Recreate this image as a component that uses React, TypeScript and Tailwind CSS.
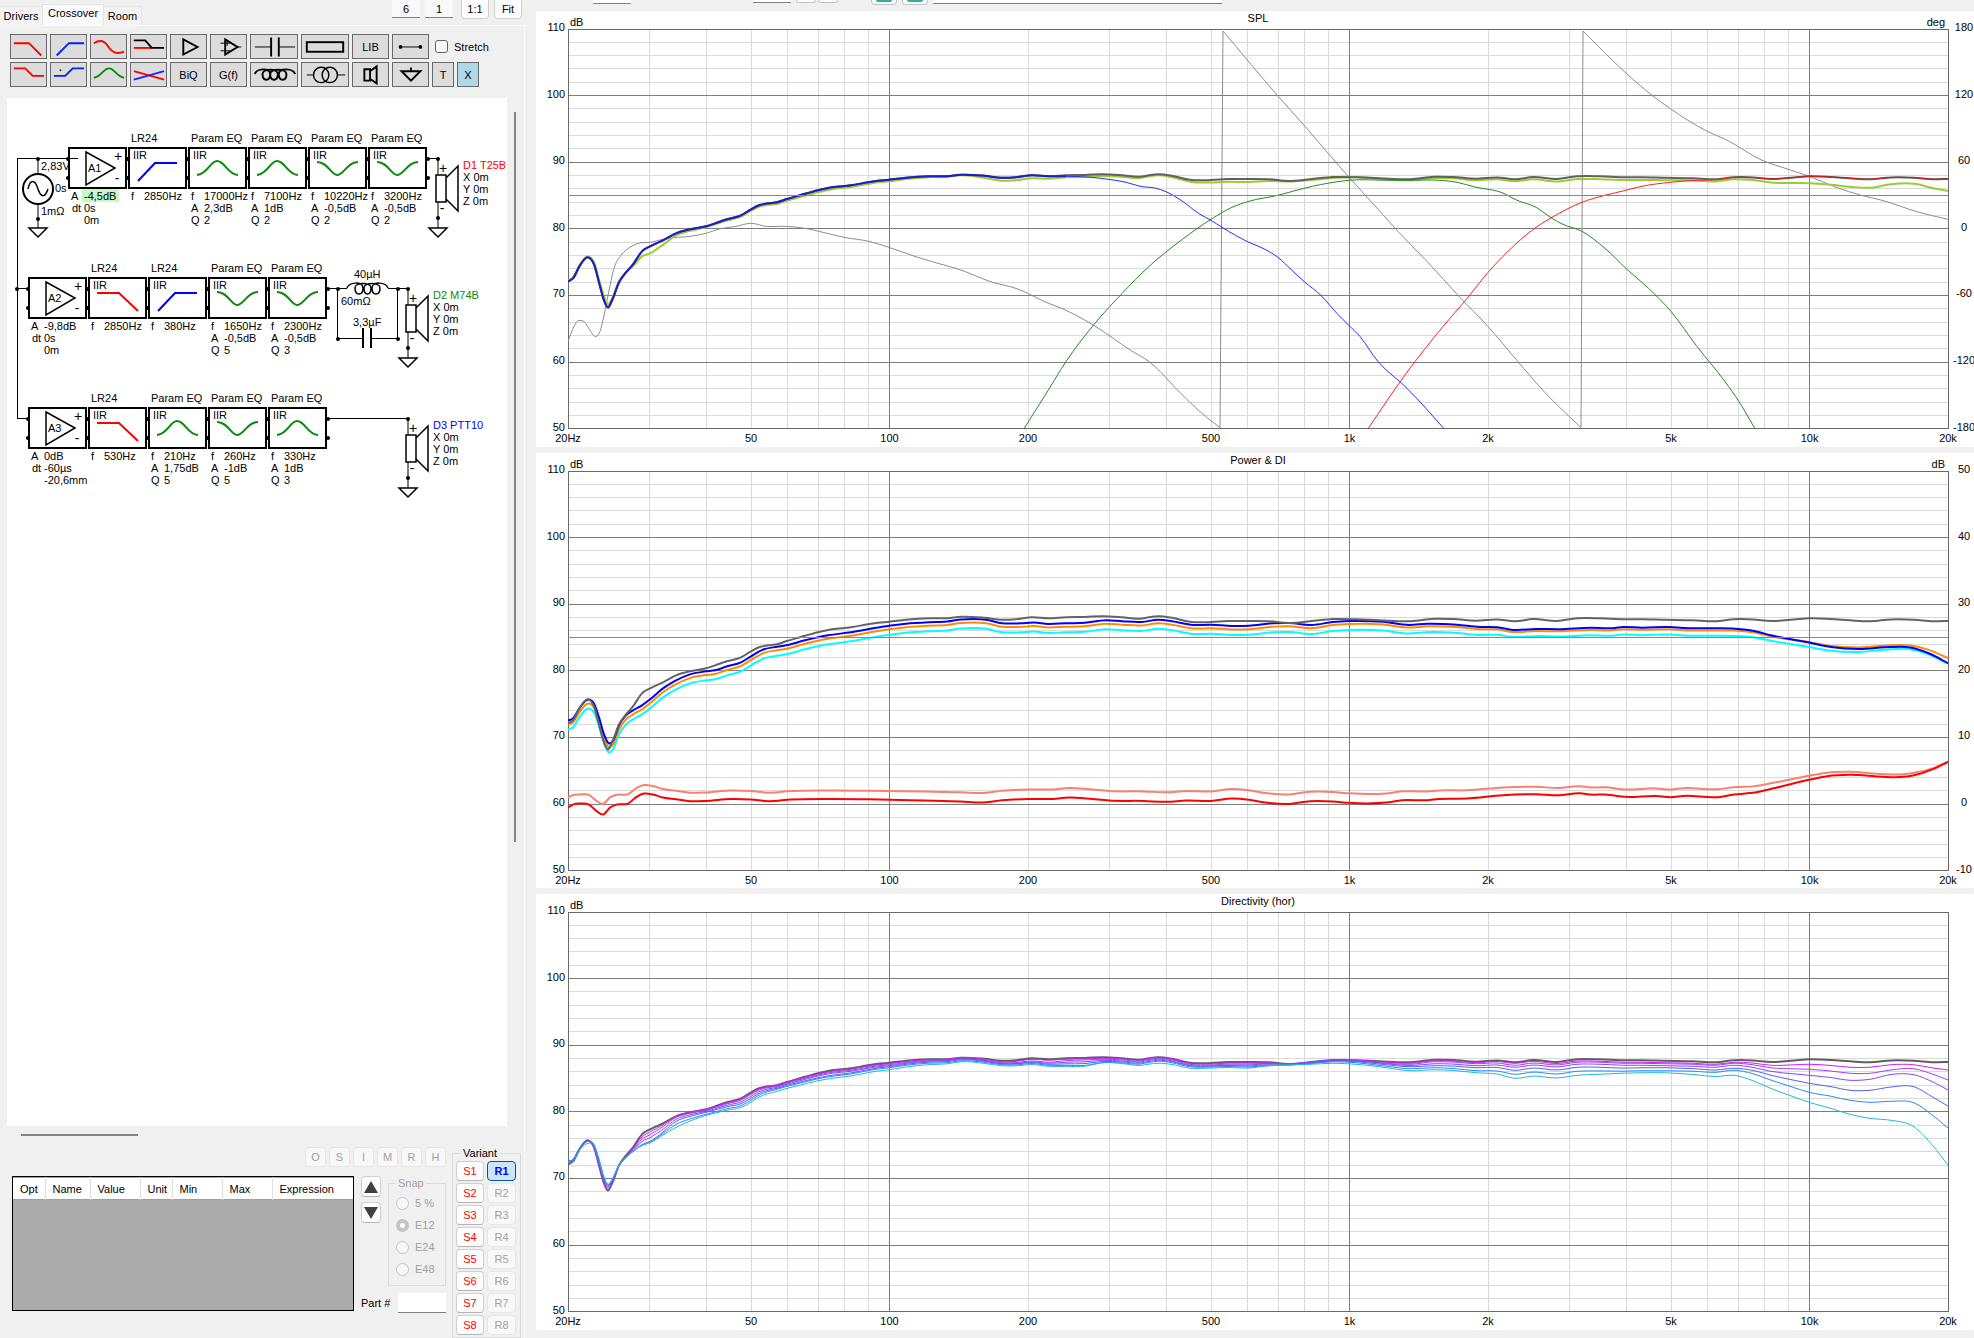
import { useState, type ReactNode } from "react";
import clsx from "clsx";

type Point = [number, number];

/* ---------- curve data, in plot units (1380 x 399) ---------- */

const PLOT_W = 1380;
const PLOT_H = 399;

const onAxis: Point[] = [
  [0, 252], [5, 249], [12, 236], [20, 228], [26, 235], [31, 253], [36, 271], [40, 278], [44, 271], [51, 253],
  [58, 243], [65, 235], [74, 222], [82, 217], [95, 211], [108, 204], [122, 200], [138, 197], [147, 194],
  [159, 190], [173, 186], [183, 180], [191, 176], [200, 174], [209, 173], [218, 170], [232, 166], [250, 161],
  [264, 158], [283, 156], [300, 153], [310, 151.5], [321, 150.5], [338, 148.5], [361, 147], [379, 147],
  [393, 145.5], [416, 146.5], [434, 148.5], [448, 148], [464, 146], [480, 147], [498, 146], [517, 145.7],
  [535, 145], [554, 146], [572, 147.5], [581, 146], [590, 145], [604, 146.5], [622, 150.5], [643, 150.8],
  [659, 149.8], [681, 149.8], [700, 150], [721, 151.7], [742, 150], [765, 147.8], [788, 148], [811, 149],
  [843, 150], [866, 147.5], [885, 147.8], [908, 149.5], [929, 148.2], [947, 150], [965, 147.8], [989, 149.7],
  [1009, 147], [1032, 147], [1055, 148], [1074, 148], [1097, 148.5], [1125, 149], [1148, 150], [1166, 148],
  [1185, 148.2], [1203, 149.7], [1226, 148.2], [1241, 147], [1263, 147.7], [1282, 149], [1302, 150],
  [1323, 148.2], [1346, 148.5], [1365, 150], [1380, 149.7],
];

const woofer: Point[] = [
  ...onAxis.filter(([x]) => x <= 480),
  [498, 147], [522, 148], [540, 150], [558, 153], [572, 157], [588, 159], [597, 162], [613, 171], [632, 185],
  [643, 191], [654, 198], [681, 213], [695, 219], [710, 228], [723, 240], [736, 252], [753, 266], [769, 284],
  [781, 296], [792, 307], [810, 332], [820, 342], [833, 353], [848, 368], [876, 399],
];

const midrange: Point[] = [
  [456, 399], [480, 361], [498, 332], [526, 295], [554, 264], [581, 237], [613, 211], [643, 190], [664, 178],
  [681, 172], [710, 166], [736, 159], [769, 152.5], [781, 151], [820, 151], [843, 151], [871, 151], [889, 153],
  [908, 158], [920, 160], [933, 163], [949, 171], [968, 178], [984, 189], [995, 195], [1014, 202], [1037, 219],
  [1058, 239], [1088, 266], [1103, 282], [1129, 317], [1157, 352], [1171, 372], [1187, 399],
];

const tweeter: Point[] = [
  [800, 399], [838, 344], [875, 297], [899, 269], [920, 243], [940, 222], [968, 198], [984, 188], [1014, 173],
  [1037, 166], [1058, 161], [1074, 157], [1103, 153], [1129, 151], [1148, 150.5],
  ...onAxis.filter(([x]) => x > 1150),
];

// one array per wrap of the phase
const phase: Point[][] = [
  [
    [0, 312], [5, 299], [9, 292], [13, 291], [17, 293], [22, 301], [28, 307], [32, 302], [36, 286], [40, 266],
    [46, 239], [53, 226], [62, 218], [70, 214], [82, 213], [99, 209], [122, 207], [138, 204], [150, 200],
    [168, 197], [183, 194], [198, 197], [218, 197], [237, 199], [255, 203], [276, 208], [301, 212], [321, 218],
    [347, 227], [370, 234], [388, 239], [425, 253], [448, 259], [460, 264], [476, 272], [494, 279], [526, 296],
    [563, 321], [581, 332], [613, 364], [632, 382], [643, 391], [652, 398],
  ],
  [
    [655, 2], [681, 33], [710, 67], [736, 96], [760, 124], [781, 148], [811, 181], [829, 201], [859, 232],
    [892, 268], [920, 297], [949, 331], [977, 363], [1013, 398],
  ],
  [
    [1015, 2], [1058, 44], [1085, 67], [1103, 80], [1139, 102], [1157, 110], [1194, 131], [1220, 140],
    [1241, 147], [1268, 158], [1293, 166], [1314, 171], [1351, 183], [1380, 190],
  ],
];

const power: Point[] = [
  [0, 249], [5, 247], [12, 236], [20, 228], [26, 232], [31, 246], [36, 263], [41, 272], [45, 269], [51, 254],
  [58, 244], [65, 239], [74, 234], [82, 228], [95, 217], [108, 209], [122, 203], [138, 200], [147, 199],
  [159, 195], [173, 191], [183, 185], [196, 178], [209, 175.5], [218, 174], [237, 169], [260, 164], [283, 161],
  [300, 158], [321, 154.5], [338, 152.5], [361, 151], [379, 150.3], [393, 148.3], [418, 148.5], [434, 152],
  [453, 152], [466, 151.3], [480, 152.7], [498, 152], [517, 151.6], [538, 149], [554, 150], [574, 150.7],
  [590, 148.5], [604, 150], [625, 153.7], [643, 153.5], [664, 154.7], [681, 154.4], [705, 152], [721, 151.7],
  [744, 153.7], [765, 150.7], [781, 149.8], [815, 150.5], [841, 153.7], [859, 152.5], [889, 153.5], [912, 155.7],
  [929, 156], [945, 158.7], [968, 157.7], [991, 158], [1023, 156.5], [1042, 157], [1055, 155.8], [1074, 156.4],
  [1102, 155.8], [1115, 156.7], [1143, 157], [1164, 157.2], [1185, 159.5], [1203, 164], [1241, 171.3],
  [1263, 175.7], [1291, 177.7], [1323, 175.7], [1342, 176.2], [1360, 181.7], [1380, 191.7],
];

const directivityIndex: Point[] = [
  [0, 336], [5, 333], [12, 332], [21, 333], [28, 339], [35, 343], [42, 336], [49, 333], [60, 332], [69, 325],
  [76, 322], [85, 323], [95, 326], [108, 327.7], [122, 329.7], [138, 329.4], [163, 327.4], [183, 328],
  [200, 329.7], [223, 328], [260, 327.4], [301, 327.7], [356, 329], [393, 330], [416, 331], [434, 328.8],
  [460, 327.4], [485, 327.4], [501, 326], [521, 327.2], [541, 329], [576, 329.4], [599, 330.3], [618, 329],
  [643, 329.4], [664, 327], [681, 328.3], [695, 330.7], [721, 332.4], [742, 329.7], [765, 330], [781, 331.3],
  [818, 331], [834, 328.7], [859, 328.6], [871, 327.4], [899, 327], [935, 323.7], [968, 322.7], [991, 323.7],
  [1012, 321.7], [1023, 323], [1037, 323], [1058, 325.3], [1088, 324.4], [1103, 325.6], [1115, 324.4],
  [1150, 325.6], [1166, 323], [1187, 321], [1208, 316.3], [1241, 308.3], [1259, 304.7], [1282, 303.3],
  [1314, 305.3], [1332, 305.6], [1346, 303.7], [1365, 297.7], [1380, 290.3],
];

const listeningOffsets: Point[] = [
  [0, -1], [20, -1], [36, -4], [44, -2], [60, 0], [70, 4], [82, 7], [108, 2], [138, 1], [250, 2], [321, 1.5],
  [393, 0.5], [434, 3], [464, 3], [498, 2], [554, 1.5], [590, 1], [643, 2.5], [681, 3], [721, 0.5], [765, 1],
  [781, -0.5], [811, 0.5], [843, 1], [908, 1.5], [945, 2], [1023, 3], [1097, 2.5], [1166, 2], [1195, 3],
  [1220, 5], [1241, 7], [1296, 9], [1332, 6], [1351, 6], [1380, 12],
];
const earlyOffsets: Point[] = [
  [0, 4], [41, 4], [65, 4], [200, 3.5], [681, 3.5], [945, 2], [1150, 2.3], [1200, 1.3], [1241, -0.5],
  [1291, -1.5], [1342, -2], [1380, -5],
];
const soundPowerOffsets: Point[] = [
  [0, 9], [681, 9], [781, 9], [912, 8], [945, 7], [1023, 7.5], [1164, 7.5], [1203, 5.5], [1241, 4.5],
  [1291, 3], [1323, 2.3], [1380, 0.5],
];
const earlyDiOffsets: Point[] = [
  [0, -10], [12, -9], [35, -10.5], [76, -8.5], [300, -8.5], [416, -9.5], [781, -9.5], [1012, -7], [1150, -8],
  [1208, -5.5], [1241, -4], [1282, -3], [1346, -2.5], [1380, 0],
];

// [x, offset of each off-axis angle below the on-axis curve]
const angleOffsets: number[][] = [
  [0, -1, -2, -3, -3, -3, -2], [20, 0, 0, 1, 1, 1, 3], [31, -1, -2, -3, -5, -6, -6], [40, -1, -3, -4, -5, -6, -6],
  [51, 0, 0, 0, 0, 0, 0], [65, 1, 2, 3, 4, 4, 4], [78, 3, 6, 9, 13, 14, 14], [90, 2, 4, 7, 10, 11, 12],
  [108, 0, 1, 3, 5, 8, 11], [138, 0, 1, 2, 3, 5, 6], [183, 1, 2, 4, 6, 8, 10], [209, 0, 1, 2, 3, 4, 6],
  [264, 1, 2, 3, 5, 6, 8], [321, 1, 2, 3, 4, 5, 7], [393, 0, 1, 1, 2, 3, 4], [434, 1, 2, 3, 3, 4, 5],
  [480, 1, 3, 4, 5, 6, 7], [512, 1, 2, 4, 6, 8, 9], [538, 1, 2, 3, 4, 5, 5], [590, 0, 1, 2, 3, 4, 6],
  [643, 1, 2, 3, 3, 4, 5], [681, 1, 2, 3, 4, 5, 6], [721, 0, 0, 0, 1, 1, 1], [781, 0, 0, 0, 1, 2, 4],
  [797, 0, 1, 1, 2, 3, 4], [836, 1, 2, 3, 4, 6, 8], [866, 1, 2, 4, 6, 8, 10], [912, 1, 2, 4, 6, 9, 11],
  [945, 1, 3, 5, 8, 12, 16], [1023, 2, 3, 5, 8, 12, 16], [1050, 2, 3, 5, 8, 11, 13], [1097, 2, 3, 5, 7, 10, 12],
  [1166, 2, 3, 5, 8, 10, 15], [1195, 3, 5, 8, 11, 15, 23], [1241, 5, 10, 16, 24, 33, 43],
  [1282, 6, 12, 19, 29, 39, 53], [1302, 5, 11, 17, 28, 40, 56], [1330, 4, 9, 13, 26, 41, 61],
  [1346, 4, 8, 14, 26, 42, 66], [1360, 5, 10, 17, 32, 49, 77], [1380, 8, 18, 28, 44, 66, 103],
];
const angleColors = ["#d61aff", "#ac38ff", "#8148ff", "#4f62f5", "#2d8ae6", "#22b8dc"];

function valueAt(table: Point[], x: number) {
  const i = table.findIndex(([tx]) => tx >= x);
  if (i <= 0) return i === 0 ? table[0][1] : table[table.length - 1][1];
  const [x0, y0] = table[i - 1];
  const [x1, y1] = table[i];
  return y0 + ((y1 - y0) * (x - x0)) / (x1 - x0);
}

const shifted = (curve: Point[], offsets: Point[]): Point[] => curve.map(([x, y]) => [x, y + valueAt(offsets, x)]);

// cubic Hermite through the points, slopes weighted by the distance to each neighbour
function smooth(points: Point[], start = "M") {
  const rise = (i: number) => (points[i + 1][1] - points[i][1]) / (points[i + 1][0] - points[i][0]);
  const last = points.length - 1;
  const slopes = points.map(([x], i) => {
    if (i === 0) return rise(0);
    if (i === last) return rise(last - 1);
    const before = x - points[i - 1][0];
    const after = points[i + 1][0] - x;
    return (rise(i - 1) * after + rise(i) * before) / (before + after);
  });
  let d = `${start}${points[0][0]} ${points[0][1]}`;
  for (let i = 0; i < last; i++) {
    const [x0, y0] = points[i];
    const [x1, y1] = points[i + 1];
    const h = (x1 - x0) / 3;
    d += `C${x0 + h} ${y0 + slopes[i] * h} ${x1 - h} ${y1 - slopes[i + 1] * h} ${x1} ${y1}`;
  }
  return d;
}

interface Curve {
  d: string;
  color: string;
  width: number;
}

const phaseCurve: Curve = {
  d: phase.map((part, i) => smooth(part, i ? "L" : "M")).join(""),
  color: "#8c8c8c",
  width: 1,
};

const splCurves: Curve[] = [
  phaseCurve,
  { d: smooth(shifted(onAxis, listeningOffsets)), color: "#9acd32", width: 2 },
  { d: smooth(onAxis), color: "#606060", width: 2 },
  { d: smooth(midrange), color: "#228b22", width: 1 },
  { d: smooth(woofer.filter(([x]) => x <= 500)), color: "#1c1cc8", width: 2 },
  { d: smooth(woofer.filter(([x]) => x >= 498)), color: "#2a2aff", width: 1 },
  { d: smooth(tweeter.filter(([x]) => x <= 1170)), color: "#ff2020", width: 1 },
  { d: smooth(tweeter.filter(([x]) => x >= 1166)), color: "#d01c1c", width: 1 },
];

const powerCurves: Curve[] = [
  { d: smooth(shifted(power, soundPowerOffsets)), color: "#00ffff", width: 2 },
  { d: smooth(shifted(power, earlyOffsets)), color: "#ff8c00", width: 2 },
  { d: smooth(power), color: "#0000ff", width: 2 },
  { d: smooth(onAxis), color: "#646464", width: 2 },
  { d: smooth(shifted(directivityIndex, earlyDiOffsets)), color: "#fa8072", width: 2 },
  { d: smooth(directivityIndex), color: "#ff0000", width: 2 },
];

const directivityCurves: Curve[] = [
  { d: smooth(onAxis), color: "#606060", width: 2 },
  ...angleColors.map((color, i) => ({
    d: smooth(shifted(onAxis, angleOffsets.map((row): Point => [row[0], row[i + 1]]))),
    color,
    width: 1,
  })),
];

/* ---------- charts ---------- */

const frequencies = [
  30, 40, 50, 60, 70, 80, 90, 200, 300, 400, 500, 600, 700, 800, 900, 2000, 3000, 4000, 5000, 6000, 7000, 8000, 9000,
];
const decades = [100, 1000, 10000];
const frequencyLabels: [number, string][] = [
  [20, "20Hz"], [50, "50"], [100, "100"], [200, "200"], [500, "500"], [1000, "1k"], [2000, "2k"], [5000, "5k"],
  [10000, "10k"], [20000, "20k"],
];
const levels = [110, 100, 90, 80, 70, 60, 50];

const fx = (f: number) => `${(Math.log10(f / 20) / 3) * 100}%`;
const ly = (db: number) => `${((110 - db) / 60) * 100}%`;

interface ChartProps {
  title: string;
  curves: Curve[];
  rightUnit?: string;
  rightLabels?: string[];
  target?: boolean;
}

function Chart({ title, curves, rightUnit, rightLabels, target }: ChartProps) {
  const minor = Array.from({ length: 29 }, (_, i) => 52 + i * 2).filter((db) => db % 10 !== 0);
  return (
    <section className="flex min-h-0 flex-1 bg-white py-[18px] pr-[26px] pl-8 last:basis-[2px]">
      <svg className="h-full w-full overflow-visible text-[11px]" role="img" aria-label={title}>
        <g shapeRendering="crispEdges" strokeWidth="1">
          {minor.map((db) => (
            <line key={db} x1="0" x2="100%" y1={ly(db)} y2={ly(db)} stroke="#dadada" />
          ))}
          {frequencies.map((f) => (
            <line key={f} x1={fx(f)} x2={fx(f)} y1="0" y2="100%" stroke="#dadada" />
          ))}
          {levels.map((db) => (
            <line key={db} x1="0" x2="100%" y1={ly(db)} y2={ly(db)} stroke="#7d7d7d" />
          ))}
          {decades.map((f) => (
            <line key={f} x1={fx(f)} x2={fx(f)} y1="0" y2="100%" stroke="#7d7d7d" />
          ))}
          <rect width="100%" height="100%" fill="none" stroke="#696969" />
        </g>
        <svg width="100%" height="100%" viewBox={`0 0 ${PLOT_W} ${PLOT_H}`} preserveAspectRatio="none">
          {curves.map((curve, i) => (
            <path
              key={i}
              d={curve.d}
              fill="none"
              stroke={curve.color}
              strokeWidth={curve.width}
              strokeLinejoin="round"
              vectorEffect="non-scaling-stroke"
            />
          ))}
        </svg>
        {target && <line x1="0" x2="100%" y1={ly(85)} y2={ly(85)} stroke="#ff33ff" shapeRendering="crispEdges" />}
        <text x="50%" y="-7" textAnchor="middle">{title}</text>
        <text x="2" y="-3">dB</text>
        <text x="100%" y="-3" dx="-3" textAnchor="end">{rightUnit}</text>
        {levels.map((db, i) => (
          <g key={db}>
            <text x="-3" y={ly(db)} dy="2" textAnchor="end">{db}</text>
            <text x="100%" y={ly(db)} dx="16" dy="2" textAnchor="middle">{rightLabels?.[i]}</text>
          </g>
        ))}
        {frequencyLabels.map(([f, label]) => (
          <text key={f} x={fx(f)} y="100%" dy="13" textAnchor="middle">{label}</text>
        ))}
      </svg>
    </section>
  );
}

/* ---------- toolbar ---------- */

interface Tool {
  name: string;
  wide?: boolean;
  label?: string;
  icon?: ReactNode;
}

const toolRows: Tool[][] = [
  [
    { name: "Low pass", icon: <path d="M3 9H19L32 22" stroke="#f00" strokeWidth="2" /> },
    { name: "High pass", icon: <path d="M6 22L19 9H35" stroke="#02f" strokeWidth="2" /> },
    { name: "All pass", icon: <path d="M3 9C8 6 13 5 17 11C22 19 27 21 35 18" stroke="#f00" strokeWidth="2" /> },
    {
      name: "Shelf pass",
      icon: (
        <>
          <path d="M3 14H22" stroke="#f00" strokeWidth="2" />
          <path d="M3 6H15L22 14H35" strokeWidth="2" />
        </>
      ),
    },
    { name: "Buffer", icon: <path d="M13 5L28 13L13 21Z" strokeWidth="2" /> },
    {
      name: "Op amp",
      icon: (
        <>
          <path d="M15 5L28 13L15 21Z" strokeWidth="2" />
          <path d="M10 9H20M10 17H20M17 6V12M28 13H32" />
        </>
      ),
    },
    {
      name: "Capacitor",
      wide: true,
      icon: (
        <>
          <path d="M4 13H21M29 13H46" />
          <path d="M21 3V23M29 3V23" strokeWidth="2" />
        </>
      ),
    },
    { name: "Resistor", wide: true, icon: <rect x="5" y="8" width="38" height="10" strokeWidth="2" /> },
    { name: "Library", label: "LIB" },
    {
      name: "Wire",
      icon: (
        <>
          <path d="M7 13H30" />
          <circle cx="8" cy="13" r="2" fill="#000" stroke="none" />
          <circle cx="29" cy="13" r="2" fill="#000" stroke="none" />
        </>
      ),
    },
  ],
  [
    { name: "High shelf", icon: <path d="M3 6H15L23 14H35" stroke="#f00" strokeWidth="2" /> },
    {
      name: "Low shelf",
      icon: (
        <>
          <path d="M3 14H15L23 6H35" stroke="#02f" strokeWidth="2" />
          <circle cx="10" cy="8" r="1" fill="#333" stroke="none" />
        </>
      ),
    },
    {
      name: "Parametric EQ",
      icon: <path d="M3 16C11 15 13 6 19 6C25 6 27 15 35 16" stroke="#0a8a0a" strokeWidth="2" />,
    },
    {
      name: "Crossover pair",
      icon: (
        <>
          <path d="M3 9L35 18" stroke="#f00" strokeWidth="2" />
          <path d="M3 18L35 9" stroke="#22f" strokeWidth="2" />
        </>
      ),
    },
    { name: "Biquad", label: "BiQ" },
    { name: "Transfer function", label: "G(f)" },
    {
      name: "Inductor",
      wide: true,
      icon: (
        <path
          d="M4 12C6 6 20 5 20 12C20 20 12 20 12 12C12 6 28 6 28 12C28 20 20 20 20 12C20 6 37 6 37 12C37 20 29 20 29 12C29 5 44 6 46 12"
          strokeWidth="2"
        />
      ),
    },
    {
      name: "Transformer",
      wide: true,
      icon: (
        <>
          <circle cx="20" cy="13" r="8" strokeWidth="1.5" />
          <circle cx="29" cy="13" r="8" strokeWidth="1.5" />
          <path d="M5 13H12M37 13H45" />
        </>
      ),
    },
    {
      name: "Driver",
      icon: <path d="M12 7H18V19H12ZM18 9L25 4V22L18 17" strokeWidth="2" />,
    },
    { name: "Ground", icon: <path d="M19 5V9M9 9H29L19 19Z" strokeWidth="2" /> },
  ],
];

function ToolButton({ tool }: { tool: Tool }) {
  return (
    <button
      aria-label={tool.name}
      className={clsx(
        "flex h-[25px] items-center justify-center border border-[#696969] bg-[#dcdcdc]",
        tool.wide ? "w-12" : "w-[37px]",
      )}
    >
      {tool.label ?? (
        <svg
          className="-m-px h-[25px] w-full shrink-0"
          viewBox={tool.wide ? "0 0 48 25" : "0 0 37 25"}
          fill="none"
          stroke="#000"
        >
          {tool.icon}
        </svg>
      )}
    </button>
  );
}

/* ---------- schematic ---------- */

const blockIcons = {
  lowpass: <path d="M9 16H31L50 34" stroke="#f00" />,
  highpass: <path d="M10 34L27 16H49" stroke="#00f" />,
  peak: <path d="M9 28C20 27 22 14 29 14C37 14 39 27 50 28" stroke="#0a8a0a" />,
  dip: <path d="M9 15C20 15 23 28 29 28C36 28 39 15 50 15" stroke="#0a8a0a" />,
};

interface Block {
  icon: keyof typeof blockIcons;
  f: string;
  A?: string;
  Q?: string;
}

interface Channel {
  x: number;
  y: number;
  amp: string;
  gain: string;
  delay: string;
  distance: string;
  selected?: boolean;
  blocks: Block[];
  driverX: number;
  driver: string;
  color: string;
}

const channels: Channel[] = [
  {
    x: 68,
    y: 147,
    amp: "A1",
    gain: "-4,5dB",
    delay: "0s",
    distance: "0m",
    selected: true,
    blocks: [
      { icon: "highpass", f: "2850Hz" },
      { icon: "peak", f: "17000Hz", A: "2,3dB", Q: "2" },
      { icon: "peak", f: "7100Hz", A: "1dB", Q: "2" },
      { icon: "dip", f: "10220Hz", A: "-0,5dB", Q: "2" },
      { icon: "dip", f: "3200Hz", A: "-0,5dB", Q: "2" },
    ],
    driverX: 438,
    driver: "D1 T25B",
    color: "#f00",
  },
  {
    x: 28,
    y: 277,
    amp: "A2",
    gain: "-9,8dB",
    delay: "0s",
    distance: "0m",
    blocks: [
      { icon: "lowpass", f: "2850Hz" },
      { icon: "highpass", f: "380Hz" },
      { icon: "dip", f: "1650Hz", A: "-0,5dB", Q: "5" },
      { icon: "dip", f: "2300Hz", A: "-0,5dB", Q: "3" },
    ],
    driverX: 408,
    driver: "D2 M74B",
    color: "#0a8a0a",
  },
  {
    x: 28,
    y: 407,
    amp: "A3",
    gain: "0dB",
    delay: "-60µs",
    distance: "-20,6mm",
    blocks: [
      { icon: "lowpass", f: "530Hz" },
      { icon: "peak", f: "210Hz", A: "1,75dB", Q: "5" },
      { icon: "dip", f: "260Hz", A: "-1dB", Q: "5" },
      { icon: "peak", f: "330Hz", A: "1dB", Q: "3" },
    ],
    driverX: 408,
    driver: "D3 PTT10",
    color: "#00f",
  },
];

const Label = ({ x, y, children, fill = "#000" }: { x: number; y: number; children: ReactNode; fill?: string }) => (
  <text x={x} y={y} fill={fill} stroke="none">{children}</text>
);

const Sign = ({ x, y, children }: { x: number; y: number; children: ReactNode }) => (
  <text x={x} y={y} textAnchor="middle" fill="#000" stroke="none" className="text-sm">{children}</text>
);

const Dot = ({ x, y }: { x: number; y: number }) => <circle cx={x} cy={y} r="2" fill="#000" stroke="none" />;

function Frame() {
  return (
    <>
      <rect x="1" y="1" width="57" height="40" fill="#fff" strokeWidth="2" />
      <Dot x={0} y={12} />
      <Dot x={0} y={31} />
      <Dot x={60} y={12} />
      <Dot x={60} y={31} />
    </>
  );
}

function ChannelRow({ channel }: { channel: Channel }) {
  const { x, y, blocks, driverX } = channel;
  return (
    <>
      <g transform={`translate(${x} ${y})`}>
        <Frame />
        <path d="M18 5L47 21L18 38Z" strokeWidth="1.5" />
        <Label x={20} y={25}>{channel.amp}</Label>
        <Sign x={50} y={14}>+</Sign>
        <Sign x={49} y={36}>-</Sign>
        {channel.selected && <rect x="14" y="42" width="37" height="13" fill="#c6f9c6" stroke="none" />}
        <Label x={3} y={53}>A</Label>
        <Label x={16} y={53}>{channel.gain}</Label>
        <Label x={4} y={65}>dt</Label>
        <Label x={16} y={65}>{channel.delay}</Label>
        <Label x={16} y={77}>{channel.distance}</Label>
      </g>
      {blocks.map((block, i) => (
        <g key={i} transform={`translate(${x + 60 * (i + 1)} ${y})`}>
          <Frame />
          <Label x={3} y={-5}>{block.A ? "Param EQ" : "LR24"}</Label>
          <Label x={5} y={12}>IIR</Label>
          <g strokeWidth="2">{blockIcons[block.icon]}</g>
          <Label x={3} y={53}>f</Label>
          <Label x={16} y={53}>{block.f}</Label>
          {block.A && (
            <>
              <Label x={3} y={65}>A</Label>
              <Label x={16} y={65}>{block.A}</Label>
              <Label x={3} y={77}>Q</Label>
              <Label x={16} y={77}>{block.Q}</Label>
            </>
          )}
        </g>
      ))}
      <g transform={`translate(${driverX} ${y})`}>
        <Dot x={0} y={12} />
        <path d="M0 12V28M0 55V81" />
        <path d="M-2 28H8V55H-2ZM8 31L20 19V64L8 52" strokeWidth="1.5" />
        <Sign x={5} y={26}>+</Sign>
        <Sign x={4} y={66}>-</Sign>
        <Dot x={0} y={71} />
        <path d="M-9 81H9L0 90Z" strokeWidth="1.5" />
        <Label x={25} y={22} fill={channel.color}>{channel.driver}</Label>
        <Label x={25} y={34}>X 0m</Label>
        <Label x={25} y={46}>Y 0m</Label>
        <Label x={25} y={58}>Z 0m</Label>
      </g>
    </>
  );
}

function Schematic() {
  return (
    <svg className="block h-[420px] w-[500px] text-[11px]" viewBox="7 98 500 420" fill="none" stroke="#000">
      <g shapeRendering="crispEdges">
        <path d="M68 158.5H17.5V418.5H28M17.5 288.5H28" />
        <path d="M428 158.5H438M328 418.5H408" />
        <path d="M328 288.5H347M388 288.5H408M337.5 288.5V338.5H363M371 338.5H397.5V288.5" />
      </g>
      <Dot x={38} y={159} />
      <Dot x={17} y={289} />
      <path d="M38 159V174M38 204V228" />
      <circle cx="38" cy="189" r="15" strokeWidth="2" />
      <path d="M28 189C30 179 35 179 38 189C41 198 45 198 48 189" strokeWidth="1.5" />
      <Dot x={38} y={219} />
      <path d="M29 228H47L38 237Z" strokeWidth="1.5" />
      <Label x={41} y={170}>2,83V</Label>
      <Label x={55} y={192}>0s</Label>
      <Label x={41} y={215}>1mΩ</Label>

      {channels.map((channel) => (
        <ChannelRow key={channel.amp} channel={channel} />
      ))}
      <path d="M68 158.5H78" />

      <path
        d="M347 288C349 282 363 281 363 288C363 296 355 296 355 288C355 282 371 282 371 288C371 296 364 296 364 288C364 282 380 282 380 288C380 296 372 296 372 288C372 281 386 282 388 288"
        strokeWidth="1.5"
      />
      <path d="M363 328V348M371 328V348" strokeWidth="2" />
      <Dot x={338} y={289} />
      <Dot x={398} y={289} />
      <Dot x={338} y={339} />
      <Dot x={398} y={339} />
      <Label x={354} y={278}>40µH</Label>
      <Label x={341} y={305}>60mΩ</Label>
      <Label x={353} y={326}>3,3µF</Label>
    </svg>
  );
}

/* ---------- parameter area ---------- */

const columns: [string, string][] = [
  ["Opt", "w-8"],
  ["Name", "w-[45px]"],
  ["Value", "w-[50px]"],
  ["Unit", "w-8"],
  ["Min", "w-[50px]"],
  ["Max", "w-[50px]"],
  ["Expression", ""],
];

const smallButton = "flex items-center justify-center rounded border";
const enabledButton = "border-[#d0d0d0] border-b-[#b4b4b4] bg-[#fdfdfd]";
const disabledButton = "border-[#e6e6e6] bg-[#f8f8f8] text-[#a0a0a0]";

function ParameterTable() {
  return (
    <div className="h-[135px] flex-1 border border-black bg-[#ababab]">
      <table className="w-full table-fixed border-collapse bg-white">
        <thead>
          <tr className="h-[22px] border-t border-b border-[#a0a0a0]">
            {columns.map(([name, width]) => (
              <th
                key={name}
                className={clsx(
                  "whitespace-nowrap border-r border-[#e0e0e0] pl-[7px] text-left font-normal last:border-r-0",
                  width,
                )}
              >
                {name}
              </th>
            ))}
          </tr>
        </thead>
      </table>
    </div>
  );
}

function ParameterArea() {
  const [variant, setVariant] = useState(1);
  return (
    <div className="flex h-[191px] gap-[6px] pl-3">
      <div className="flex w-[434px] flex-col gap-[9px]">
        <div className="flex justify-end gap-[3px]">
          {["O", "S", "I", "M", "R", "H"].map((key) => (
            <button key={key} disabled className={clsx(smallButton, disabledButton, "h-5 w-[21px]")}>
              {key}
            </button>
          ))}
        </div>
        <div className="flex gap-[7px]">
          <ParameterTable />
          <div className="flex w-[85px] flex-col gap-[7px]">
            <div className="flex gap-[7px]">
              <div className="flex flex-col gap-[5px]">
                <button aria-label="Move up" className={clsx(smallButton, enabledButton, "h-[21px] w-5")}>
                  <svg className="h-3 w-[14px]" viewBox="0 0 14 12">
                    <path d="M7 0L14 12H0Z" fill="#404040" />
                  </svg>
                </button>
                <button aria-label="Move down" className={clsx(smallButton, enabledButton, "h-[21px] w-5")}>
                  <svg className="h-3 w-[14px]" viewBox="0 0 14 12">
                    <path d="M7 12L14 0H0Z" fill="#404040" />
                  </svg>
                </button>
              </div>
              <fieldset disabled className="flex-1 border border-[#dcdcdc] px-[7px] pt-[2px] pb-[5px] text-[#a0a0a0]">
                <legend className="px-[2px] leading-[14px]">Snap</legend>
                {["5 %", "E12", "E24", "E48"].map((value) => (
                  <label key={value} className="flex h-[22px] items-center gap-[6px]">
                    <input
                      type="radio"
                      name="snap"
                      defaultChecked={value === "E12"}
                      className="h-[13px] w-[13px] shrink-0 appearance-none rounded-full border border-[#c4c4c4] bg-[#f8f8f8] checked:border-4 checked:bg-white"
                    />
                    {value}
                  </label>
                ))}
              </fieldset>
            </div>
            <label className="flex h-5 items-center justify-between">
              Part #
              <input className="h-5 w-12 border-b border-[#808080] bg-white px-1" />
            </label>
          </div>
        </div>
      </div>
      <fieldset className="w-[69px] border border-[#dcdcdc] px-[3px]">
        <legend className="ml-1 px-[3px] leading-3">Variant</legend>
        <div className="grid grid-cols-[28px_29px] gap-x-[3px] gap-y-[2px] pt-[2px]">
          {[1, 2, 3, 4, 5, 6, 7, 8].map((n) => (
            <div key={n} className="contents">
              <button
                className={clsx(smallButton, enabledButton, "h-5 text-[#f00]")}
                onClick={() => setVariant(n)}
              >
                S{n}
              </button>
              <button
                disabled={n !== variant}
                className={clsx(
                  smallButton,
                  "h-5",
                  n === variant ? "border-[#005499] bg-[#cce4f7] font-bold text-[#00f]" : disabledButton,
                )}
              >
                R{n}
              </button>
            </div>
          ))}
        </div>
      </fieldset>
    </div>
  );
}

/* ---------- page ---------- */

function CrossoverPanel() {
  return (
    <aside className="flex w-[536px] shrink-0 flex-col">
      <div className="flex h-[25px] items-start justify-between pr-[14px]">
        <div role="tablist" className="flex h-full items-end">
          <button role="tab" className="h-[19px] w-[42px] border-t border-[#e4e4e4] bg-[#f3f3f3]">Drivers</button>
          <button
            role="tab"
            aria-selected
            className="h-[21px] w-[62px] border border-b-0 border-[#e4e4e4] bg-[#fafafa] pb-1"
          >
            Crossover
          </button>
          <button role="tab" className="h-[19px] w-[38px] border-t border-r border-[#e4e4e4] bg-[#f3f3f3]">Room</button>
        </div>
        <div className="flex items-start">
          <input
            aria-label="Columns"
            defaultValue="6"
            className="mr-[5px] h-[18px] w-7 border-b border-[#808080] bg-[#f9f9f9] text-center"
          />
          <input
            aria-label="Rows"
            defaultValue="1"
            className="mr-2 h-[18px] w-7 border-b border-[#808080] bg-[#f9f9f9] text-center"
          />
          <button className="mr-[5px] h-[19px] w-7 rounded-b border border-t-0 border-[#cfcfcf] bg-[#fdfdfd]">1:1</button>
          <button className="h-[19px] w-7 rounded-b border border-t-0 border-[#cfcfcf] bg-[#fdfdfd]">Fit</button>
        </div>
      </div>

      <div className="mr-[11px] flex min-h-0 flex-1 flex-col border-t border-r border-[#fafafa]">
        <div className="flex flex-col gap-[3px] px-[10px] pt-2">
          <div className="flex gap-[3px]">
            {toolRows[0].map((tool) => (
              <ToolButton key={tool.name} tool={tool} />
            ))}
            <label className="ml-[3px] flex items-center gap-[6px]">
              <input
                type="checkbox"
                className="h-[13px] w-[13px] appearance-none rounded-[3px] border border-[#626262] bg-[#f8f8f8]"
              />
              Stretch
            </label>
          </div>
          <div className="flex gap-[3px]">
            {toolRows[1].map((tool) => (
              <ToolButton key={tool.name} tool={tool} />
            ))}
            <button className="h-[25px] w-[22px] border border-[#696969] bg-[#dcdcdc]">T</button>
            <button className="h-[25px] w-[22px] border border-[#696969] bg-[#add8e6]">X</button>
          </div>
        </div>

        <div className="mt-[11px] flex min-h-0 flex-1 pl-[7px]">
          <div className="w-[500px] overflow-hidden bg-white">
            <Schematic />
          </div>
          <div className="ml-[7px] w-[2px] pt-[14px]">
            <div className="h-[72%] bg-[#858585]" />
          </div>
        </div>
        <div className="h-[21px] pt-2 pl-[21px]">
          <div className="h-[2px] w-[117px] bg-[#858585]" />
        </div>
        <ParameterArea />
      </div>
    </aside>
  );
}

function PlotStrip() {
  return (
    <div className="flex h-[11px] items-start pl-[57px]">
      <div className="h-1 w-[38px] border-b border-[#808080] bg-white" />
      <div className="ml-[122px] h-[3px] w-[38px] border-b border-[#808080] bg-white" />
      <div className="ml-[5px] h-[3px] w-5 rounded-b border border-t-0 border-[#c4c4c4] bg-white" />
      <div className="ml-[2px] h-[3px] w-5 rounded-b border border-t-0 border-[#c4c4c4] bg-white" />
      <div className="ml-[33px] flex h-[5px] w-[26px] justify-center rounded-b border border-t-0 border-[#c4c4c4] bg-white">
        <div className="h-[2px] w-4 rounded-b-xs bg-[#2fae92]" />
      </div>
      <div className="ml-[5px] flex h-[5px] w-[26px] justify-center rounded-b border border-t-0 border-[#c4c4c4] bg-white">
        <div className="h-[2px] w-4 rounded-b-xs bg-[#2fae92]" />
      </div>
      <div className="ml-[5px] h-1 w-[289px] border-b border-[#808080] bg-white" />
    </div>
  );
}

export default function App() {
  return (
    <div className="flex h-screen overflow-hidden bg-[#f0f0f0] font-['Liberation_Sans',Arial,sans-serif] text-[11px] leading-4 text-black">
      <CrossoverPanel />
      <main className="flex min-w-0 flex-1 flex-col">
        <PlotStrip />
        <div className="flex min-h-0 flex-1 flex-col gap-[6px] pb-2">
          <Chart
            title="SPL"
            curves={splCurves}
            rightUnit="deg"
            rightLabels={["180", "120", "60", "0", "-60", "-120", "-180"]}
            target
          />
          <Chart
            title="Power & DI"
            curves={powerCurves}
            rightUnit="dB"
            rightLabels={["50", "40", "30", "20", "10", "0", "-10"]}
            target
          />
          <Chart title="Directivity (hor)" curves={directivityCurves} />
        </div>
      </main>
    </div>
  );
}
